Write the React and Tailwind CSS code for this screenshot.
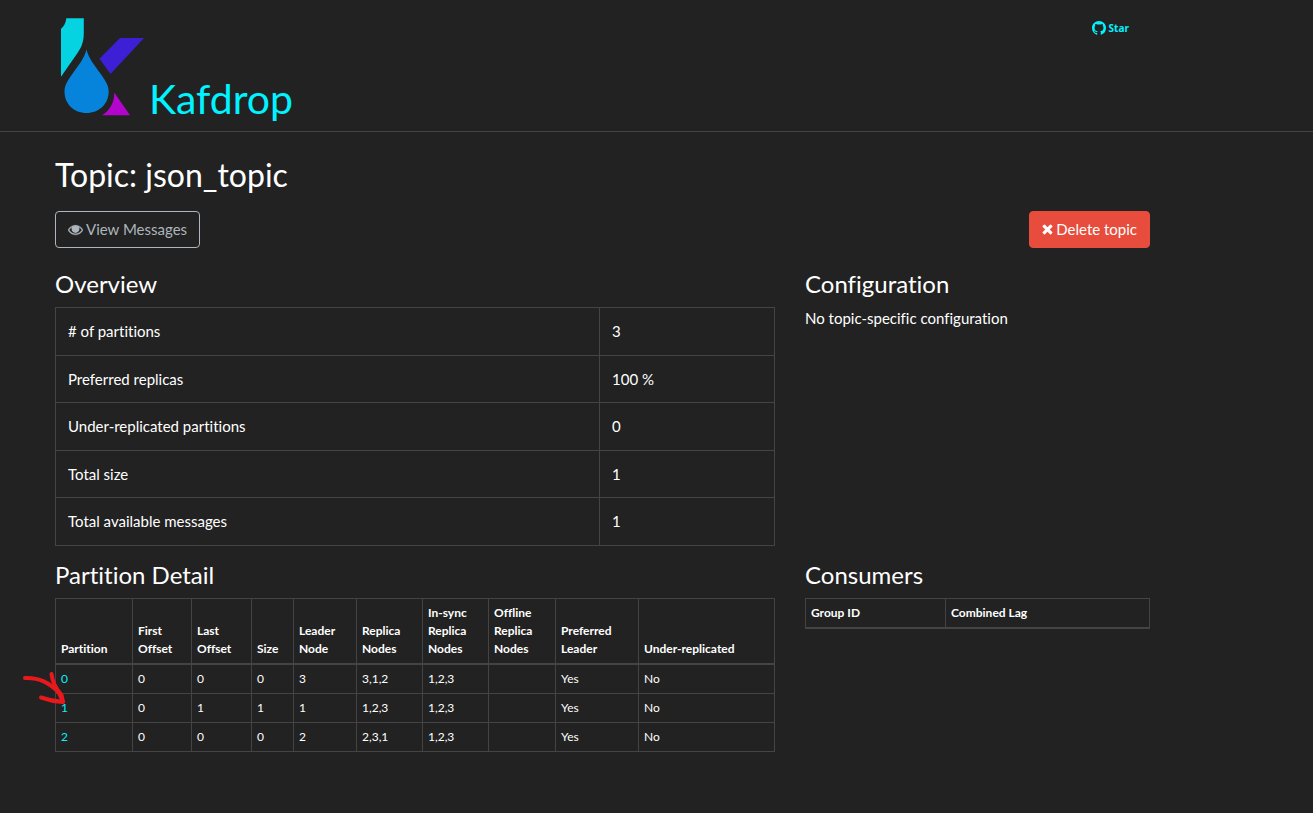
import React from "react";

const overview = [
  ["# of partitions", "3"],
  ["Preferred replicas", "100 %"],
  ["Under-replicated partitions", "0"],
  ["Total size", "1"],
  ["Total available messages", "1"],
];

const partitionColumns = [
  { label: "Partition", width: "w-[77px]" },
  { label: "First Offset", width: "w-[59px]" },
  { label: "Last Offset", width: "w-[60px]" },
  { label: "Size", width: "w-[42px]" },
  { label: "Leader Node", width: "w-[63px]" },
  { label: "Replica Nodes", width: "w-[66px]" },
  { label: "In-sync Replica Nodes", width: "w-[66px]" },
  { label: "Offline Replica Nodes", width: "w-[67px]" },
  { label: "Preferred Leader", width: "w-[83px]" },
  { label: "Under-replicated", width: "" },
];

const partitions = [
  ["0", "0", "0", "0", "3", "3,1,2", "1,2,3", "", "Yes", "No"],
  ["1", "0", "1", "1", "1", "1,2,3", "1,2,3", "", "Yes", "No"],
  ["2", "0", "0", "0", "2", "2,3,1", "1,2,3", "", "Yes", "No"],
];

function Logo() {
  return (
    <svg width="84" height="98" viewBox="0 0 84 98" aria-hidden="true">
      <path fill="#06d3e1" d="M6.3.3H23.8V14.5C23.8 23 22 28.500 17.500 35L1 58.700V10.800C4 8.500 6 4.500 6.300.3Z" />
      <path fill="#3d1fd6" d="M60 20H84L50.500 56L39.500 40.700Z" />
      <path fill="#0684dc" d="M26.500 31.500C29 41 34 46.500 40 55C45 62 48.700 67 48.700 73.500C48.700 86 39 95 26.500 95C14 95 4.500 86 4.500 73.500C4.500 67 8 62 13 55C19 46.500 24 41 26.500 31.500Z" />
      <path fill="#b405cf" d="M54.300 74.500L70 97.300H42C49 93 54.500 85 54.300 74.500Z" />
    </svg>
  );
}

function GithubIcon() {
  return (
    <svg width="14" height="14" viewBox="0 0 16 16" fill="currentColor" aria-hidden="true">
      <path d="M8 0C3.58 0 0 3.58 0 8c0 3.54 2.29 6.53 5.47 7.59.4.07.55-.17.55-.38 0-.19-.01-.82-.01-1.49-2.01.37-2.53-.49-2.69-.94-.09-.23-.48-.94-.82-1.13-.28-.15-.68-.52-.01-.53.63-.01 1.08.58 1.23.82.72 1.21 1.87.87 2.33.66.07-.52.28-.87.51-1.07-1.78-.2-3.64-.89-3.64-3.95 0-.87.31-1.59.82-2.15-.08-.2-.36-1.02.08-2.12 0 0 .67-.21 2.2.82.64-.18 1.32-.27 2-.27.68 0 1.36.09 2 .27 1.53-1.04 2.2-.82 2.2-.82.44 1.1.16 1.92.08 2.12.51.56.82 1.27.82 2.15 0 3.07-1.87 3.75-3.65 3.95.29.25.54.73.54 1.48 0 1.07-.01 1.93-.01 2.2 0 .21.15.46.55.38A8.013 8.013 0 0016 8c0-4.42-3.58-8-8-8z" />
    </svg>
  );
}

function EyeIcon() {
  return (
    <svg width="15" height="15" viewBox="0 0 1792 1792" fill="currentColor" stroke="currentColor" strokeWidth="40" aria-hidden="true">
      <path d="M1664 960q-152-236-381-353 61 104 61 225 0 185-131.5 316.5t-316.5 131.5-316.5-131.5-131.5-316.5q0-121 61-225-229 117-381 353 133 205 333.5 326.5t434.5 121.5 434.5-121.5 333.5-326.5zm-720-384q0-20-14-34t-34-14q-125 0-214.5 89.5t-89.5 214.5q0 20 14 34t34 14 34-14 14-34q0-86 61-147t147-61q20 0 34-14t14-34zm848 384q0 34-20 69-140 230-376.5 368.5t-499.5 138.5-499.5-139-376.5-368q-20-35-20-69t20-69q140-229 376.5-368t499.5-139 499.5 139 376.5 368q20 35 20 69z" />
      <circle cx="896" cy="832" r="400" stroke="none" />
    </svg>
  );
}

function TimesIcon() {
  return (
    <svg width="11" height="15" viewBox="240 132 1314 1792" fill="currentColor" aria-hidden="true">
      <path d="M1490 1322q0 40-28 68l-136 136q-28 28-68 28t-68-28l-294-294-294 294q-28 28-68 28t-68-28l-136-136q-28-28-28-68t28-68l294-294-294-294q-28-28-28-68t28-68l136-136q28-28 68-28t68 28l294 294 294-294q28-28 68-28t68 28l136 136q28 28 28 68t-28 68l-294 294 294 294q28 28 28 68z" transform="translate(0 60)" />
    </svg>
  );
}

function HandDrawnArrow() {
  return (
    <svg
      className="pointer-events-none absolute top-[72px] -left-[33px]"
      width="46"
      height="38"
      viewBox="0 0 46 38"
      fill="none"
      stroke="#e8191c"
      strokeWidth="4"
      strokeLinecap="round"
      strokeLinejoin="round"
      aria-hidden="true"
    >
      <path d="M3 8C17 7.500 27 12 38.500 24" />
      <path d="M29.500 4C30.500 14 35 20 39.500 25L41 32C33 31.500 26 30 19 27.500" />
      <path d="M36 21L41 32" />
    </svg>
  );
}

function Section({ title, className, children }) {
  return (
    <section className={className}>
      <h2 className="mb-[9px] text-2xl leading-7">{title}</h2>
      {children}
    </section>
  );
}

export default function App() {
  return (
    <div className="min-h-screen bg-[#222] font-[Lato,'Open_Sans',sans-serif] text-[15px] leading-normal text-white [font-variant-ligatures:none]">
      <header className="border-b border-[#444]">
        <div className="flex max-w-[1150px] items-start justify-between pt-[18px] pr-[21px] pb-2 pl-[60px]">
          <a href="#home" className="flex items-end gap-[5px] text-[41px] leading-[48px] text-[#00f3ff]">
            <span className="pb-[7px]">
              <Logo />
            </span>
            <h1>Kafdrop</h1>
          </a>
          <a
            href="#star"
            className="mt-[2px] flex items-center gap-[3px] font-['Open_Sans',sans-serif] text-[10px] leading-4 font-bold text-[#00f3ff]"
          >
            <GithubIcon />
            Star
          </a>
        </div>
      </header>

      <main className="max-w-[1150px] pt-6 pb-10 pl-[55px]">
        <h1 className="text-[32px] leading-[38px]">Topic: json_topic</h1>

        <div className="mt-[17px] flex items-center justify-between">
          <button
            type="button"
            className="flex items-center gap-[3px] rounded border border-[#adb5bd] px-3 py-[6px] leading-[23px] text-[#adb5bd]"
          >
            <EyeIcon />
            View Messages
          </button>
          <button
            type="button"
            className="flex items-center gap-[3px] rounded border border-[#e74c3c] bg-[#e74c3c] px-3 py-[6px] leading-[23px] text-white"
          >
            <TimesIcon />
            Delete topic
          </button>
        </div>

        <div className="mt-[22px] grid grid-cols-12 gap-x-[30px] gap-y-[15px]">
          <Section title="Overview" className="col-span-8">
            <table className="w-full table-fixed border-collapse">
              <tbody>
                {overview.map(([label, value]) => (
                  <tr key={label}>
                    <td className="border border-[#444] p-3">{label}</td>
                    <td className="w-[175px] border border-[#444] p-3">{value}</td>
                  </tr>
                ))}
              </tbody>
            </table>
          </Section>

          <Section title="Configuration" className="col-span-4">
            <p>No topic-specific configuration</p>
          </Section>

          <Section title="Partition Detail" className="col-span-8">
            <div className="relative">
              <table className="w-full table-fixed border-collapse text-xs leading-[18px]">
                <thead>
                  <tr>
                    {partitionColumns.map(({ label, width }) => (
                      <th
                        key={label}
                        scope="col"
                        className={`${width} border border-b-2 border-[#444] p-[5px] text-left align-bottom font-bold`}
                      >
                        {label}
                      </th>
                    ))}
                  </tr>
                </thead>
                <tbody>
                  {partitions.map((row) => (
                    <tr key={row[0]}>
                      {row.map((value, i) => (
                        <td key={i} className="border border-[#444] p-[5px]">
                          {i === 0 ? (
                            <a href={`#partition-${value}`} className="text-[#00f3ff]">
                              {value}
                            </a>
                          ) : (
                            value
                          )}
                        </td>
                      ))}
                    </tr>
                  ))}
                </tbody>
              </table>
              <HandDrawnArrow />
            </div>
          </Section>

          <Section title="Consumers" className="col-span-4">
            <table className="w-full table-fixed border-collapse text-xs leading-[18px]">
              <thead>
                <tr>
                  <th scope="col" className="w-[140px] border border-b-2 border-[#444] p-[5px] text-left font-bold">
                    Group ID
                  </th>
                  <th scope="col" className="border border-b-2 border-[#444] p-[5px] text-left font-bold">
                    Combined Lag
                  </th>
                </tr>
              </thead>
            </table>
          </Section>
        </div>
      </main>
    </div>
  );
}
